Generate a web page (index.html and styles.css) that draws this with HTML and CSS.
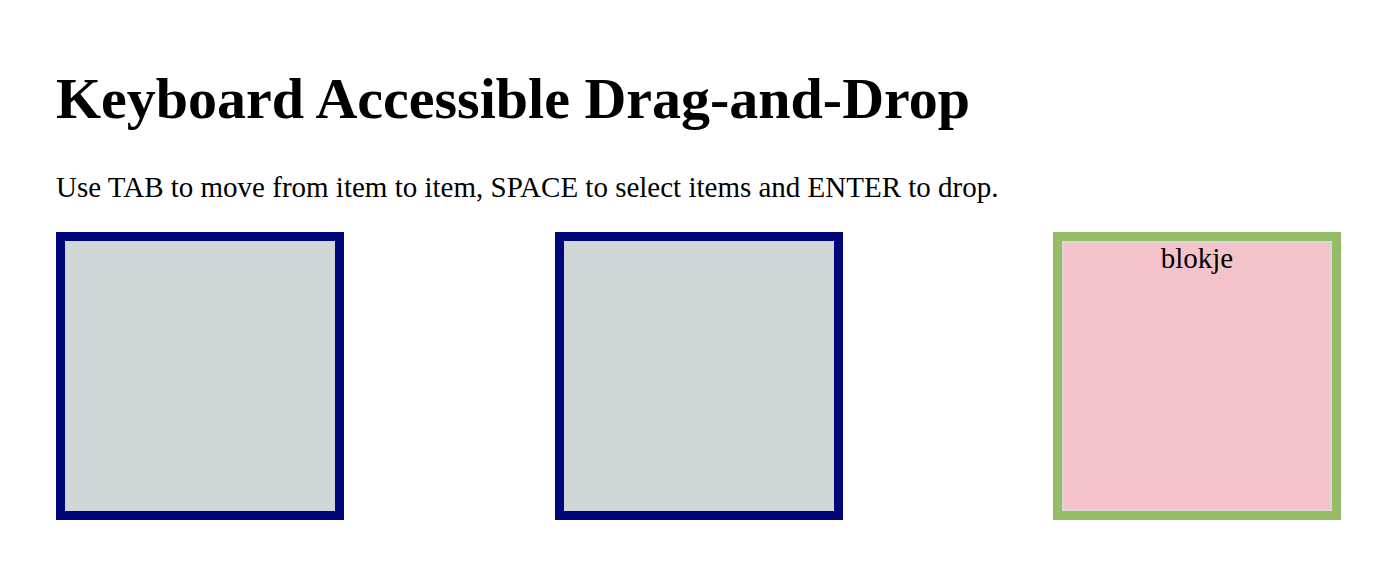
FILE: index.html
```html
<!DOCTYPE html>
<html lang="en">
<head>
<meta charset="utf-8">
<title>Keyboard Accessible Drag-and-Drop</title>
<link rel="stylesheet" href="styles.css">
</head>
<body>
<main class="page">
  <h1 class="title">Keyboard Accessible Drag-and-Drop</h1>
  <p class="intro">Use TAB to move from item to item, SPACE to select items and ENTER to drop.</p>
  <div class="zones">
    <div class="zone" tabindex="0"></div>
    <div class="zone" tabindex="0"></div>
    <div class="zone zone-active" tabindex="0">
      <div class="item" draggable="true" tabindex="0">blokje</div>
    </div>
  </div>
</main>
</body>
</html>
```

FILE: styles.css
```css
* {
  box-sizing: border-box;
}

body {
  margin: 0;
  background: #fff;
  color: #000;
  font-family: "Liberation Serif", "Times New Roman", serif;
  font-size: 29px;
  line-height: 34px;
}

.page {
  padding: 65px 53px 52px 56px;
}

.title {
  margin: 0 0 38px;
  font-size: 58px;
  line-height: 67px;
  font-weight: bold;
}

.intro {
  margin: 0 0 28px;
}

.zones {
  display: flex;
  justify-content: space-between;
}

.zone {
  width: 288px;
  height: 288px;
  border: 9px solid #000778;
  background: #d1d6d6;
}

.zone-active {
  border-color: #95bc67;
}

.item {
  height: 100%;
  border: 2px solid #ddd5d9;
  background: #f4c2cb;
  line-height: 30px;
  text-align: center;
}
```
